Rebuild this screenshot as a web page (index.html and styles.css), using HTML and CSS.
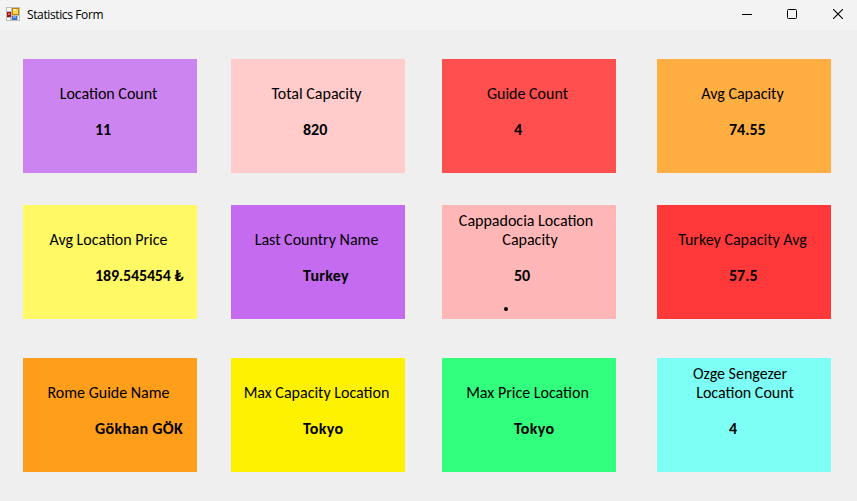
FILE: index.html
```html
<!DOCTYPE html>
<html lang="en">
<head>
<meta charset="utf-8">
<title>Statistics Form</title>
<link rel="stylesheet" href="styles.css">
</head>
<body>
<header class="titlebar">
  <svg class="app-icon" width="14" height="14" viewBox="0 0 14 14" shape-rendering="crispEdges">
    <rect width="14" height="14" fill="#bdbdbd"/>
    <path d="M1 1h4v3H1zM1 11h3v2H1zM12 9h1v4h-1z" fill="#fafafa"/>
    <rect x="1" y="5" width="4" height="5" fill="#a31313"/>
    <rect x="2" y="6" width="2" height="2" fill="#d96b5c"/>
    <rect x="6" y="1" width="7" height="7" fill="#bd8500"/>
    <rect x="7" y="2" width="5" height="5" fill="#ffd34d"/>
    <rect x="7" y="2" width="3" height="2" fill="#ffe99b"/>
    <rect x="6" y="9" width="5" height="4" fill="#3c6fd0"/>
    <rect x="7" y="9" width="3" height="2" fill="#75a7f5"/>
  </svg>
  <h1 class="title">Statistics Form</h1>
  <div class="controls">
    <svg width="10" height="10" viewBox="0 0 10 10"><path d="M0 5.5h10" stroke="#000"/></svg>
    <svg width="10" height="10" viewBox="0 0 10 10"><rect x=".5" y=".5" width="9" height="9" rx="1" fill="none" stroke="#000"/></svg>
    <svg class="close" width="10" height="10" viewBox="0 0 10 10"><path d="M0 0l10 10M10 0L0 10" stroke="#000" stroke-width="1.1"/></svg>
  </div>
</header>
<main class="stats">
  <section class="card orchid"><h2 class="label">Location Count</h2><p class="value">11</p></section>
  <section class="card blush"><h2 class="label">Total Capacity</h2><p class="value">820</p></section>
  <section class="card coral"><h2 class="label">Guide Count</h2><p class="value">4</p></section>
  <section class="card apricot"><h2 class="label">Avg Capacity</h2><p class="value">74.55</p></section>
  <section class="card lemon"><h2 class="label">Avg Location Price</h2><p class="value price">189.545454 ₺</p></section>
  <section class="card violet"><h2 class="label">Last Country Name</h2><p class="value name">Turkey</p></section>
  <section class="card pink"><h2 class="label"><span class="first-place">Cappadocia Location</span><br><span class="second-capacity">Capacity</span></h2><p class="value">50</p><p class="dot"></p></section>
  <section class="card red"><h2 class="label">Turkey Capacity Avg</h2><p class="value">57.5</p></section>
  <section class="card orange"><h2 class="label">Rome Guide Name</h2><p class="value name">Gökhan GÖK</p></section>
  <section class="card yellow"><h2 class="label">Max Capacity Location</h2><p class="value name">Tokyo</p></section>
  <section class="card green"><h2 class="label">Max Price Location</h2><p class="value name">Tokyo</p></section>
  <section class="card aqua"><h2 class="label"><span class="first-name">Ozge Sengezer</span><br><span class="second-count">Location Count</span></h2><p class="value">4</p></section>
</main>
</body>
</html>
```
FILE: styles.css
```css
* { box-sizing: border-box; }
body {
  margin: 0;
  height: 501px;
  overflow: hidden;
  background: #efefef;
  color: #000;
  font-family: Carlito, Calibri, Lato, sans-serif;
}
.titlebar {
  display: flex;
  align-items: center;
  height: 30px;
  padding: 0 14px 0 6px;
  background: #f3f3f3;
}
.app-icon { margin-top: -2px; }
.title {
  margin: 0 0 0 7px;
  font: 400 12px/16px "Open Sans", sans-serif;
  letter-spacing: -.38px;
}
.controls {
  display: flex;
  gap: 35px;
  margin: -2px 0 0 auto;
}
.controls svg { display: block; }
.controls .close { margin-left: 1px; }
.stats {
  display: grid;
  grid-template-columns: 208px 211px 215px 174px;
  grid-template-rows: 146px 153px 114px;
  padding: 29px 26px 29px 23px;
}
.card {
  display: flex;
  flex-direction: column;
  width: 174px;
  height: 114px;
}
.label {
  display: flow-root;
  align-content: end;
  height: 44px;
  margin: 0;
  padding-right: 3px;
  font-size: 16px;
  font-weight: 400;
  line-height: 19px;
  text-align: center;
  white-space: nowrap;
}
.value {
  margin: 17px 0 0 72px;
  font-size: 16px;
  font-weight: 700;
  line-height: 19px;
  white-space: nowrap;
}
.name { letter-spacing: .3px; }
.price { letter-spacing: -.15px; }
.first-place { margin-right: 3px; }
.second-capacity { margin-left: 5px; }
.first-name { margin-right: 5px; }
.second-count { margin-left: 5px; }
.dot {
  width: 4px;
  height: 4px;
  margin: 22px 0 0 62px;
  border-radius: 50%;
  background: #000;
}
.orchid { background: #cc84f0; }
.blush { background: #ffcccb; }
.coral { background: #ff4f4f; }
.apricot { background: #ffae42; }
.lemon { background: #fff966; }
.violet { background: #c46bf0; }
.pink { background: #ffb6b6; }
.red { background: #ff3939; }
.orange { background: #ff9e1b; }
.yellow { background: #fff200; }
.green { background: #32ff7e; }
.aqua { background: #7efff5; }
```
